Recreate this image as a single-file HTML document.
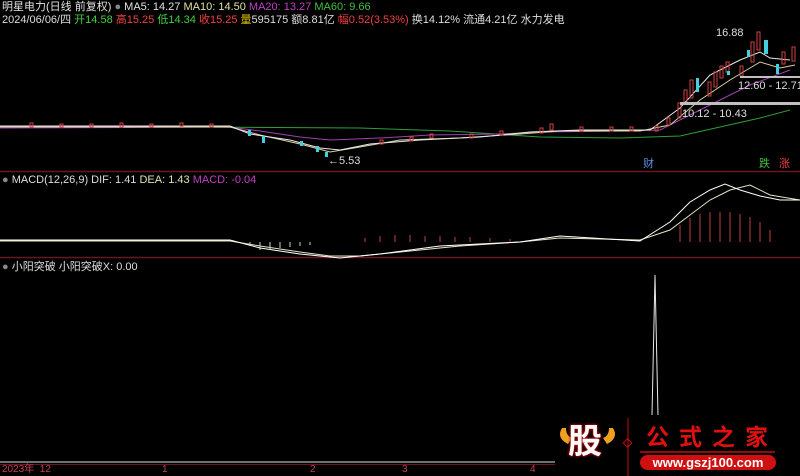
<!DOCTYPE html>
<html><head><meta charset="utf-8"><style>
html,body{margin:0;padding:0;background:#000;width:800px;height:476px;overflow:hidden;font-family:"Liberation Sans","Noto Sans CJK SC",sans-serif;}
.t{position:absolute;font-size:11px;white-space:nowrap;line-height:12px}
</style></head><body>
<svg width="800" height="476" style="position:absolute;left:0;top:0" xmlns="http://www.w3.org/2000/svg">
<!-- separators -->
<line x1="0" y1="171.5" x2="800" y2="171.5" stroke="#6a1620" stroke-width="1.5"/>
<line x1="0" y1="257.5" x2="800" y2="257.5" stroke="#6a1620" stroke-width="1.5"/>
<!-- main chart MAs -->
<polyline fill="none" stroke="#2e9e3a" stroke-width="1" points="0,127 200,127 360,128 450,131 540,137 620,138 680,136 720,127 760,118 790,110"/>
<polyline fill="none" stroke="#a040b0" stroke-width="1" points="0,128 230,127 260,131 300,137 330,140 380,138 430,135 500,134 540,132 620,131 660,130 690,115 720,100 750,85 790,70"/>
<polyline fill="none" stroke="#d8d0a0" stroke-width="1" points="0,127 230,127 260,135 300,144 330,152 360,147 400,140 460,138 520,134 560,131 640,131 670,125 700,100 730,80 760,62 780,68 795,65"/>
<polyline fill="none" stroke="#e8e8e8" stroke-width="1" points="0,126 230,126 250,134 290,140 320,148 340,150 370,144 420,140 480,137 530,132 580,130 650,130 680,108 710,75 740,60 760,52 770,58 790,60"/>
<!-- candles -->
<g stroke="#d04040" fill="none" stroke-width="1">
<rect x="30" y="123" width="3" height="4"/><rect x="60" y="124" width="3" height="3"/><rect x="90" y="124" width="3" height="3"/><rect x="120" y="123" width="3" height="4"/><rect x="150" y="124" width="3" height="3"/><rect x="180" y="123" width="3" height="3"/><rect x="210" y="124" width="3" height="3"/>
<rect x="380" y="140" width="3" height="4"/><rect x="410" y="137" width="3" height="4"/><rect x="430" y="134" width="3" height="4"/><rect x="470" y="134" width="3" height="4"/><rect x="500" y="131" width="3" height="4"/><rect x="540" y="128" width="3" height="5"/><rect x="550" y="124" width="3" height="6"/><rect x="580" y="127" width="3" height="4"/><rect x="610" y="127" width="3" height="4"/><rect x="630" y="127" width="3" height="4"/><rect x="655" y="126" width="3" height="5"/>
<rect x="667" y="118" width="3" height="7"/><rect x="678" y="103" width="3" height="15"/><rect x="684" y="90" width="3" height="13"/><rect x="690" y="80" width="3" height="18"/><rect x="708" y="82" width="3" height="14"/><rect x="714" y="72" width="3" height="15"/><rect x="720" y="66" width="3" height="12"/><rect x="726" y="62" width="3" height="10"/><rect x="740" y="66" width="3" height="10"/><rect x="751" y="42" width="3" height="20"/><rect x="757" y="32" width="3" height="18"/><rect x="782" y="52" width="3" height="12"/><rect x="792" y="47" width="3" height="14"/>
</g>
<g fill="#40d0e0">
<rect x="248" y="130" width="3" height="6"/><rect x="262" y="136" width="3" height="7"/><rect x="300" y="141" width="3" height="5"/><rect x="316" y="146" width="3" height="6"/><rect x="325" y="152" width="3" height="5"/>
<rect x="696" y="78" width="3" height="14"/><rect x="727" y="71" width="3" height="4"/><rect x="747" y="50" width="3" height="7"/><rect x="764" y="40" width="4" height="14"/><rect x="776" y="64" width="3" height="10"/>
</g>
<!-- range boxes -->
<rect x="680" y="102" width="120" height="3" fill="#c0c0c0"/>
<rect x="740" y="76" width="60" height="2" fill="#c0c0c0"/>
<!-- MACD -->
<polyline fill="none" stroke="#e8e0c0" stroke-width="1" points="0,241 230,241 260,246 300,252 330,256 360,256 400,252 460,246 520,242 560,238 640,240 670,230 690,215 710,200 730,190 750,185 770,195 800,200"/>
<polyline fill="none" stroke="#fff" stroke-width="1" points="0,240 230,240 260,248 300,254 340,258 380,254 440,246 520,242 560,236 640,241 670,222 690,202 710,190 725,184 740,190 760,196 780,200 800,200"/>
<g stroke="#c04040" stroke-width="1">
<line x1="365" y1="242" x2="365" y2="238"/><line x1="380" y1="242" x2="380" y2="236"/><line x1="395" y1="242" x2="395" y2="235"/><line x1="410" y1="242" x2="410" y2="235"/><line x1="425" y1="242" x2="425" y2="236"/><line x1="440" y1="242" x2="440" y2="236"/><line x1="455" y1="242" x2="455" y2="237"/><line x1="470" y1="242" x2="470" y2="237"/><line x1="490" y1="242" x2="490" y2="238"/><line x1="510" y1="242" x2="510" y2="239"/>
<line x1="680" y1="242" x2="680" y2="225"/><line x1="690" y1="242" x2="690" y2="218"/><line x1="700" y1="242" x2="700" y2="214"/><line x1="710" y1="242" x2="710" y2="212"/><line x1="720" y1="242" x2="720" y2="212"/><line x1="730" y1="242" x2="730" y2="212"/><line x1="740" y1="242" x2="740" y2="214"/><line x1="750" y1="242" x2="750" y2="217"/><line x1="760" y1="242" x2="760" y2="222"/><line x1="770" y1="242" x2="770" y2="230"/>
</g>
<g stroke="#b0e0d0" stroke-width="1">
<line x1="250" y1="242" x2="250" y2="246"/><line x1="260" y1="242" x2="260" y2="250"/><line x1="270" y1="242" x2="270" y2="250"/><line x1="280" y1="242" x2="280" y2="248"/><line x1="290" y1="242" x2="290" y2="247"/><line x1="300" y1="242" x2="300" y2="246"/><line x1="310" y1="242" x2="310" y2="245"/>
</g>
<!-- spike -->
<polyline fill="none" stroke="#e8e8e8" stroke-width="1" points="652,415 655,275 658,415"/>
<!-- bottom axis -->
<line x1="0" y1="462" x2="555" y2="462" stroke="#e0e0e0" stroke-width="1"/>
<line x1="0" y1="464.5" x2="555" y2="464.5" stroke="#6a1620" stroke-width="1"/>
<!-- logo -->
<line x1="628" y1="418" x2="628" y2="476" stroke="#c01010" stroke-width="1"/>
<rect x="624.5" y="440" width="6" height="6" transform="rotate(45 627.5 443)" fill="none" stroke="#c01010"/>
<line x1="640" y1="452" x2="775" y2="452" stroke="#c01010" stroke-width="1.5"/>
<rect x="640" y="455" width="136" height="15" rx="7.5" fill="#d01010"/>
<path d="M562,428 q-6,10 6,16 l4,-6 q-6,-2 -6,-10z" fill="#f0a020"/>
<path d="M613,428 q6,10 -6,16 l-4,-6 q6,-2 6,-10z" fill="#f0a020"/>
</svg>
<div class="t" style="left:2px;top:1px;color:#e0e0e0">明星电力(日线 前复权) <span style="color:#888">●</span> MA5: 14.27 <span style="color:#e0e0a0">MA10: 14.50</span> <span style="color:#c040c0">MA20: 13.27</span> <span style="color:#40c040">MA60: 9.66</span></div>
<div class="t" style="left:2px;top:14px;color:#ddd">2024/06/06/四 <span style="color:#40d040">开14.58</span> <span style="color:#f04040">高15.25</span> <span style="color:#40d040">低14.34</span> <span style="color:#f04040">收15.25</span> <span style="color:#e0c000">量</span>595175 额8.81亿 <span style="color:#f04040">幅0.52(3.53%)</span> 换14.12% 流通4.21亿 水力发电</div>
<div class="t" style="left:716px;top:27px;color:#ddd">16.88</div>
<div class="t" style="left:738px;top:80px;color:#ddd">12.60 - 12.71</div>
<div class="t" style="left:682px;top:108px;color:#ddd">10.12 - 10.43</div>
<div class="t" style="left:328px;top:155px;color:#ddd">←5.53</div>
<div class="t" style="left:643px;top:158px;color:#6090e0">财</div>
<div class="t" style="left:759px;top:158px;color:#40c040">跌</div>
<div class="t" style="left:779px;top:158px;color:#f04040">涨</div>
<div class="t" style="left:2px;top:174px;color:#ddd"><span style="color:#888">●</span> MACD(12,26,9) DIF: 1.41 <span style="color:#e0e0b0">DEA: 1.43</span> <span style="color:#c040c0">MACD: -0.04</span></div>
<div class="t" style="left:2px;top:261px;color:#ddd"><span style="color:#888">●</span> 小阳突破 小阳突破X: 0.00</div>
<div class="t" style="left:2px;top:464px;color:#c04050;font-size:10px">2023年&nbsp;&nbsp;12<span style="position:absolute;left:160px">1</span><span style="position:absolute;left:308px">2</span><span style="position:absolute;left:400px">3</span><span style="position:absolute;left:528px">4</span></div>
<div class="t" style="left:568px;top:422px;font-size:34px;line-height:40px;font-weight:bold;color:#fff;text-shadow:0 0 3px #c01010,0 0 2px #c01010">股</div>
<div class="t" style="left:646px;top:424px;font-size:23px;line-height:26px;color:#e01010;letter-spacing:10px;font-weight:bold">公式之家</div>
<div class="t" style="left:640px;top:456px;width:136px;text-align:center;font-size:13px;line-height:14px;color:#fff;font-weight:bold">www.gszj100.com</div>
</body></html>
